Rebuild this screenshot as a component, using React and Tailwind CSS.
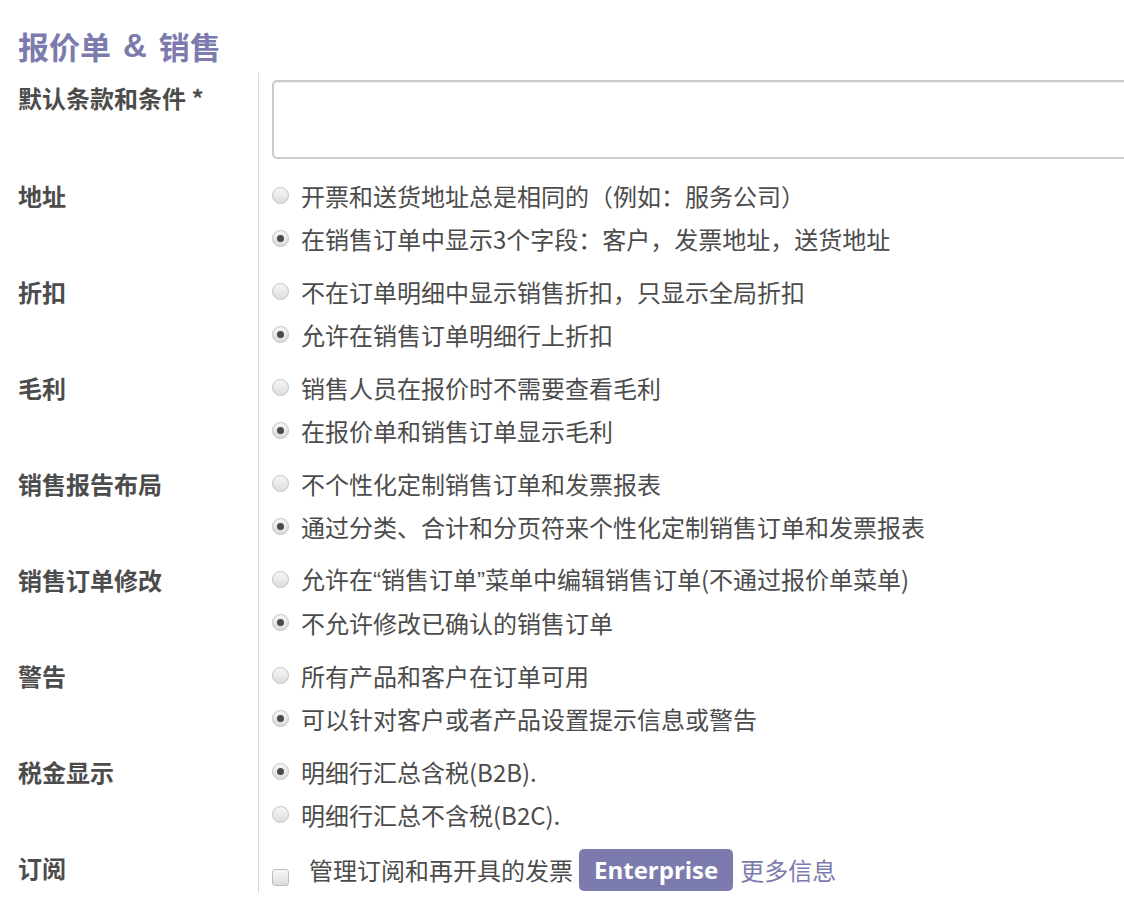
import React from 'react';

const FONT = { fontFamily: '"Noto Sans CJK SC", "Noto Sans", sans-serif' };
const LATIN = { fontFamily: '"Liberation Sans", sans-serif' };

const SECTIONS = [
  { label: '地址', options: ['开票和送货地址总是相同的（例如：服务公司）', '在销售订单中显示3个字段：客户，发票地址，送货地址'], checked: 1 },
  { label: '折扣', options: ['不在订单明细中显示销售折扣，只显示全局折扣', '允许在销售订单明细行上折扣'], checked: 1 },
  { label: '毛利', options: ['销售人员在报价时不需要查看毛利', '在报价单和销售订单显示毛利'], checked: 1 },
  { label: '销售报告布局', options: ['不个性化定制销售订单和发票报表', '通过分类、合计和分页符来个性化定制销售订单和发票报表'], checked: 1 },
  {
    label: '销售订单修改',
    options: [
      <>允许在<span style={LATIN}>“</span>销售订单<span style={LATIN}>”</span>菜单中编辑销售订单(不通过报价单菜单)</>,
      '不允许修改已确认的销售订单',
    ],
    checked: 1,
  },
  { label: '警告', options: ['所有产品和客户在订单可用', '可以针对客户或者产品设置提示信息或警告'], checked: 1 },
  { label: '税金显示', options: ['明细行汇总含税(B2B).', '明细行汇总不含税(B2C).'], checked: 0 },
];

function Radio({ checked }) {
  return (
    <span className="flex h-[17px] w-[17px] shrink-0 items-center justify-center rounded-full border border-[#c2c2c2] bg-linear-to-b from-[#f7f7f7] to-[#dcdcdc]">
      {checked && <span className="h-[7px] w-[7px] rounded-full bg-[#4a4a4a]" />}
    </span>
  );
}

function Label({ children }) {
  return (
    <div className="pl-[18px] text-[24px] font-bold leading-[43px] text-[#4c4c4c]">{children}</div>
  );
}

function RadioSection({ section }) {
  return (
    <>
      <Label>{section.label}</Label>
      <div className="border-l border-[#dadada] pb-[10px] pl-[13px]">
        {section.options.map((opt, i) => (
          <div key={i} className="flex h-[43px] items-center gap-[12px] text-[24px] text-[#4c4c4c]">
            <Radio checked={i === section.checked} />
            <span className="whitespace-nowrap">{opt}</span>
          </div>
        ))}
      </div>
    </>
  );
}

export default function App() {
  return (
    <div className="min-h-[910px] w-[1124px] overflow-hidden bg-white" style={FONT}>
      <h1 className="flex pl-[18px] pt-[26px] text-[31px] font-bold leading-[40px] text-[#7c7bad]">
        <span>报价单</span>
        <span className="mx-[12px] text-[33px]" style={LATIN}>&amp;</span>
        <span>销售</span>
      </h1>

      <div className="mt-[7px] grid grid-cols-[258px_1fr]">
        <div className="pt-[3px]">
          <Label>默认条款和条件 *</Label>
        </div>
        <div className="border-l border-[#dadada] pb-[15px] pl-[13px] pt-[7px]">
          <div className="h-[79px] w-[900px] rounded-[5px] border-2 border-[#cbcbcb] shadow-[inset_0_1px_1px_rgba(0,0,0,0.05)]" />
        </div>

        {SECTIONS.map((s) => (
          <RadioSection key={s.label} section={s} />
        ))}

        <Label>订阅</Label>
        <div className="flex h-[47px] items-center border-l border-[#dadada] pl-[13px] text-[24px] text-[#4c4c4c]">
          <span className="mt-[16px] h-[17px] w-[17px] shrink-0 rounded-[3px] border border-[#bdbdbd] bg-linear-to-b from-[#f7f7f7] to-[#dcdcdc]" />
          <span className="ml-[20px] whitespace-nowrap">管理订阅和再开具的发票</span>
          <span
            className="ml-[6px] flex h-[42px] items-center rounded-[5px] bg-[#7c7bad] px-[15px] text-[24px] font-bold text-white"
            style={{ fontFamily: '"Open Sans", "Liberation Sans", sans-serif' }}
          >
            Enterprise
          </span>
          <span className="ml-[7px] whitespace-nowrap text-[#7c7bad]">更多信息</span>
        </div>
      </div>
    </div>
  );
}
